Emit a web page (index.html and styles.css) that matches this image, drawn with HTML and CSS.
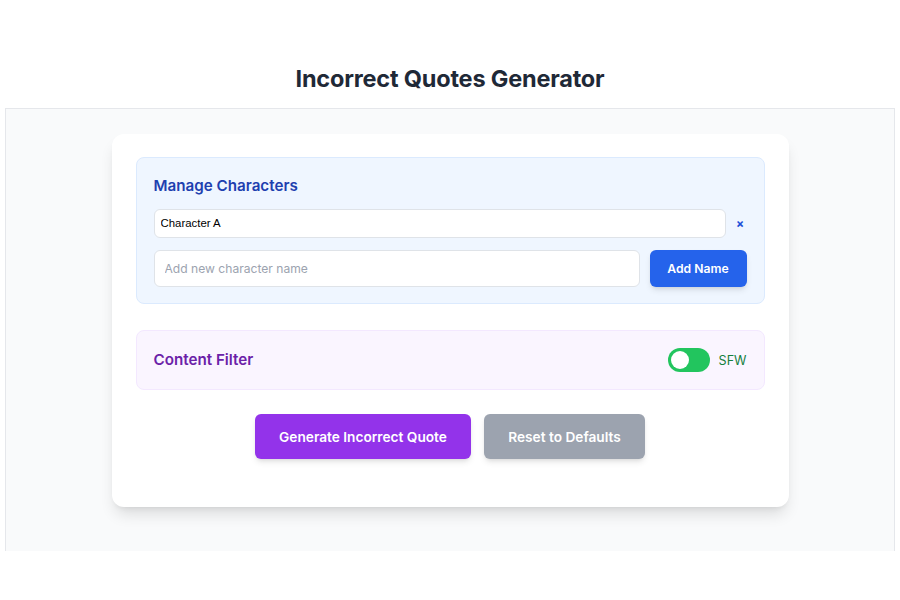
FILE: index.html
```html
<!DOCTYPE html>
<html>
<head>
<meta charset="utf-8">
<link rel="stylesheet" href="styles.css">
</head>
<body>
<h1 class="title">Incorrect Quotes Generator</h1>
<div class="frame">
  <div class="card">
    <section class="panel panel-blue">
      <h2 class="panel-title blue">Manage Characters</h2>
      <div class="char-row">
        <input class="char-input" type="text" value="Character A">
        <button class="remove">×</button>
      </div>
      <div class="add-row">
        <input class="add-input" type="text" placeholder="Add new character name">
        <button class="btn btn-blue">Add Name</button>
      </div>
    </section>
    <section class="panel panel-purple filter">
      <h2 class="panel-title purple">Content Filter</h2>
      <div class="toggle-wrap">
        <span class="toggle"><span class="knob"></span></span>
        <span class="sfw">SFW</span>
      </div>
    </section>
    <div class="actions">
      <button class="btn btn-purple">Generate Incorrect Quote</button>
      <button class="btn btn-gray">Reset to Defaults</button>
    </div>
  </div>
</div>
</body>
</html>
```
FILE: styles.css
```css
* { box-sizing: border-box; }
html, body { margin: 0; padding: 0; background: #fff; }
body {
  font-family: Inter, "Liberation Sans", sans-serif;
  color: #111827;
  padding: 0 5px;
}
.title {
  margin: 0;
  padding-top: 64px;
  height: 108px;
  text-align: center;
  font-size: 23.5px;
  font-weight: 700;
  line-height: 30px;
  color: #1f2937;
  letter-spacing: -0.2px;
}
.frame {
  background: #f9fafb;
  border: 1px solid #e5e7eb;
  border-bottom: none;
  height: 443px;
  padding: 25px 0 0;
}
.card {
  width: 677px;
  margin: 0 auto;
  background: #fff;
  border-radius: 12px;
  box-shadow: 0 10px 15px -3px rgba(0,0,0,0.12), 0 4px 6px -4px rgba(0,0,0,0.1);
  padding: 23px 24px 48px;
}
.panel {
  border-radius: 8px;
  padding: 17px 17px 16px;
}
.panel-blue {
  background: #eff6ff;
  border: 1px solid #dbeafe;
}
.panel-purple {
  background: #faf5ff;
  border: 1px solid #f3e8ff;
}
.panel-title {
  margin: 0;
  font-size: 15.2px;
  font-weight: 600;
  line-height: 22px;
}
.blue { color: #1e40af; }
.purple { color: #6b21a8; }
.panel-blue .panel-title { margin-bottom: 12px; }
.char-row {
  display: flex;
  align-items: center;
  gap: 8px;
  margin-bottom: 12px;
}
.char-input {
  flex: 1;
  height: 29px;
  border: 1px solid #dfe3e8;
  border-radius: 6px;
  background: #fff;
  padding: 0 6px 1px;
  font-family: "Liberation Sans", Arial, sans-serif;
  font-size: 11.4px;
  color: #000;
}
.remove {
  border: none;
  background: none;
  color: #1d4ed8;
  font-size: 12px;
  font-weight: 700;
  width: 13px;
  padding: 0;
  font-family: Inter, sans-serif;
}
.add-row {
  display: flex;
  gap: 10px;
}
.add-input {
  flex: 1;
  height: 37px;
  border: 1px solid #dfe3e8;
  border-radius: 6px;
  background: #fff;
  padding: 0 10px;
  font-family: Inter, sans-serif;
  font-size: 12.1px;
}
.add-input::placeholder { color: #9ca3af; }
.btn {
  border: none;
  color: #fff;
  font-family: Inter, sans-serif;
  font-weight: 600;
  font-size: 13px;
  border-radius: 6px;
  box-shadow: 0 4px 6px -1px rgba(0,0,0,0.1), 0 2px 4px -2px rgba(0,0,0,0.1);
}
.btn-blue {
  background: #2563eb;
  width: 97px;
  height: 37px;
  font-size: 12.2px;
}
.filter {
  margin-top: 26px;
  display: flex;
  align-items: center;
  justify-content: space-between;
  padding: 17px;
  height: 60px;
}
.toggle-wrap {
  display: flex;
  align-items: center;
  gap: 9px;
}
.toggle {
  width: 42px;
  height: 24px;
  border-radius: 12px;
  background: #22c55e;
  display: flex;
  align-items: center;
  padding: 0 3px;
}
.knob {
  width: 18px;
  height: 18px;
  border-radius: 50%;
  background: #fff;
}
.sfw {
  color: #15803d;
  font-size: 12.6px;
}
.actions {
  margin-top: 24px;
  display: flex;
  justify-content: center;
  gap: 13px;
}
.btn-purple {
  background: #9333ea;
  width: 216px;
  height: 45px;
  font-size: 13.7px;
}
.btn-gray {
  background: #9ca3af;
  width: 161px;
  height: 45px;
  font-size: 13.7px;
}
```
